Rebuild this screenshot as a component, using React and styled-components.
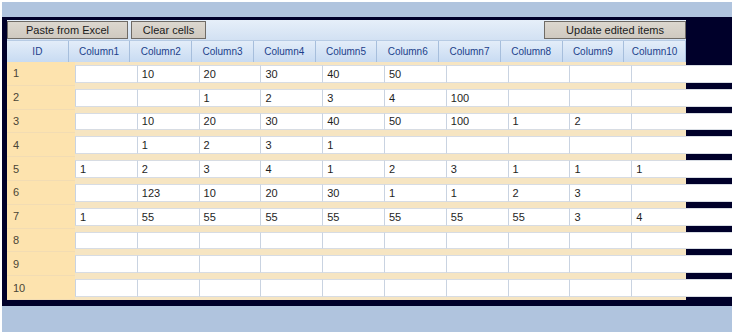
import React from 'react';
import styled, { createGlobalStyle } from 'styled-components';

const GlobalStyle = createGlobalStyle`
    html, body {
        margin: 0;
        background: #ffffff;
    }
    body {
        font-family: "Liberation Sans", Arial, sans-serif;
    }
`;

const columns = ['Column1', 'Column2', 'Column3', 'Column4', 'Column5', 'Column6', 'Column7', 'Column8', 'Column9', 'Column10'];

const rows = [
    ['', '10', '20', '30', '40', '50', '', '', '', ''],
    ['', '', '1', '2', '3', '4', '100', '', '', ''],
    ['', '10', '20', '30', '40', '50', '100', '1', '2', ''],
    ['', '1', '2', '3', '1', '', '', '', '', ''],
    ['1', '2', '3', '4', '1', '2', '3', '1', '1', '1'],
    ['', '123', '10', '20', '30', '1', '1', '2', '3', ''],
    ['1', '55', '55', '55', '55', '55', '55', '55', '3', '4'],
    ['', '', '', '', '', '', '', '', '', ''],
    ['', '', '', '', '', '', '', '', '', ''],
    ['', '', '', '', '', '', '', '', '', ''],
];

function App() {
    return (
        <Page>
            <GlobalStyle />
            <Strip $height={15} />
            <Panel>
                <Toolbar>
                    <Button $width={121}>Paste from Excel</Button>
                    <Button $width={75}>Clear cells</Button>
                    <Button $width={142} $right>Update edited items</Button>
                </Toolbar>
                <Header>
                    <HeadCell>ID</HeadCell>
                    {columns.map((c) => (
                        <HeadCell key={c}>{c}</HeadCell>
                    ))}
                </Header>
                {rows.map((r, i) => (
                    <Row key={i}>
                        <IdCell>{i + 1}</IdCell>
                        <Cells>
                            {r.map((v, j) => (
                                <Cell key={j}>{v}</Cell>
                            ))}
                        </Cells>
                    </Row>
                ))}
            </Panel>
            <Strip $height={26} />
        </Page>
    );
}

export default App;

const Page = styled.div`
    padding: 2px 0 2px 2px;
    width: 730px;
`;

const Strip = styled.div`
    height: ${(p) => p.$height}px;
    background: #b0c4de;
`;

const Panel = styled.div`
    background: #00002a;
    padding: 3px 0 6px 5px;
    overflow: hidden;
`;

const Toolbar = styled.div`
    width: 679px;
    height: 20px;
    box-sizing: border-box;
    display: flex;
    align-items: center;
    gap: 3px;
    padding: 1px 0 1px 0;
    background: linear-gradient(#e6eff9, #d2e1f3);
`;

const Button = styled.button`
    width: ${(p) => p.$width}px;
    height: 18px;
    margin-left: ${(p) => (p.$right ? 'auto' : '0')};
    padding: 0;
    box-sizing: border-box;
    border: 1px solid #6f6b66;
    background: linear-gradient(#dcd7cf, #cfc9c0);
    font-family: "Liberation Sans", Arial, sans-serif;
    font-size: 11px;
    color: #1a1a1a;
`;

const Header = styled.div`
    width: 679px;
    height: 22px;
    display: grid;
    grid-template-columns: repeat(11, 1fr);
    background: linear-gradient(#e3edf9, #c8dbf2);
    border-top: 1px solid #b7cbe4;
    box-sizing: border-box;
`;

const HeadCell = styled.div`
    display: flex;
    align-items: center;
    justify-content: center;
    border-right: 1px solid #a6bedc;
    font-size: 10px;
    color: #1b3f8b;
`;

const Row = styled.div`
    display: flex;
    height: 23.8px;
    background: linear-gradient(90deg, #f6e5c2 679px, transparent 679px);
`;

const IdCell = styled.div`
    width: 68px;
    flex: none;
    box-sizing: border-box;
    display: flex;
    align-items: center;
    padding-left: 6px;
    background: #fde3ae;
    border-bottom: 1px solid #f2dcb3;
    font-size: 11px;
    color: #4a4536;
`;

const Cells = styled.div`
    flex: 1;
    display: grid;
    grid-template-columns: repeat(9, 61.8px) 1fr;
    padding: 3px 0 3px 0;
`;

const Cell = styled.div`
    background: #ffffff;
    border-top: 1px solid #d7dce3;
    border-bottom: 1px solid #d7dce3;
    border-left: 1px solid #c9d3e1;
    display: flex;
    align-items: center;
    padding-left: 4px;
    font-size: 11px;
    color: #1e1e1e;
`;
